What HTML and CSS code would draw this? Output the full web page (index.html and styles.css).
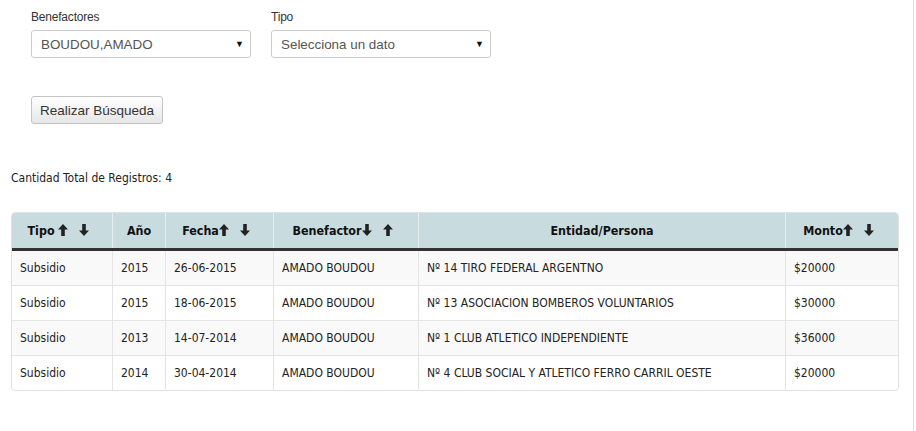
FILE: index.html
```html
<!DOCTYPE html>
<html lang="es">
<head>
<meta charset="utf-8">
<title>Subsidios</title>
<link rel="stylesheet" href="styles.css">
</head>
<body>
<div class="page">
  <div class="filters">
    <div class="field">
      <label class="lbl">Benefactores</label>
      <div class="select"><span>BOUDOU,AMADO</span><span class="caret">▼</span></div>
    </div>
    <div class="field">
      <label class="lbl">Tipo</label>
      <div class="select"><span>Selecciona un dato</span><span class="caret">▼</span></div>
    </div>
  </div>
  <button class="btn">Realizar Búsqueda</button>
  <p class="count">Cantidad Total de Registros: 4</p>
  <div class="tablewrap">
    <table class="grid">
      <thead>
        <tr>
          <th class="c1 sort">Tipo <svg class="ar" viewBox="0 0 10 12"><path d="M5 0L10 5.5H6.8V12H3.2V5.5H0Z"/></svg><span class="gap"></span><svg class="ar" viewBox="0 0 10 12"><path d="M5 12L10 6.5H6.8V0H3.2V6.5H0Z"/></svg></th>
          <th class="c2">Año</th>
          <th class="c3 sort">Fecha<svg class="ar" viewBox="0 0 10 12"><path d="M5 0L10 5.5H6.8V12H3.2V5.5H0Z"/></svg><span class="gap"></span><svg class="ar" viewBox="0 0 10 12"><path d="M5 12L10 6.5H6.8V0H3.2V6.5H0Z"/></svg></th>
          <th class="c4 sort">Benefactor<svg class="ar" viewBox="0 0 10 12"><path d="M5 12L10 6.5H6.8V0H3.2V6.5H0Z"/></svg><span class="gap"></span><svg class="ar" viewBox="0 0 10 12"><path d="M5 0L10 5.5H6.8V12H3.2V5.5H0Z"/></svg></th>
          <th class="c5">Entidad/Persona</th>
          <th class="c6 sort">Monto<svg class="ar" viewBox="0 0 10 12"><path d="M5 0L10 5.5H6.8V12H3.2V5.5H0Z"/></svg><span class="gap"></span><svg class="ar" viewBox="0 0 10 12"><path d="M5 12L10 6.5H6.8V0H3.2V6.5H0Z"/></svg></th>
        </tr>
      </thead>
      <tbody>
        <tr><td>Subsidio</td><td>2015</td><td>26-06-2015</td><td>AMADO BOUDOU</td><td>Nº 14 TIRO FEDERAL ARGENTNO</td><td>$20000</td></tr>
        <tr><td>Subsidio</td><td>2015</td><td>18-06-2015</td><td>AMADO BOUDOU</td><td>Nº 13 ASOCIACION BOMBEROS VOLUNTARIOS</td><td>$30000</td></tr>
        <tr><td>Subsidio</td><td>2013</td><td>14-07-2014</td><td>AMADO BOUDOU</td><td>Nº 1 CLUB ATLETICO INDEPENDIENTE</td><td>$36000</td></tr>
        <tr><td>Subsidio</td><td>2014</td><td>30-04-2014</td><td>AMADO BOUDOU</td><td>Nº 4 CLUB SOCIAL Y ATLETICO FERRO CARRIL OESTE</td><td>$20000</td></tr>
      </tbody>
    </table>
  </div>
</div>
</body>
</html>
```
FILE: styles.css
```css
html, body {
  margin: 0;
  padding: 0;
  background: #fff;
}
body {
  font-family: "DejaVu Sans Condensed", "DejaVu Sans", sans-serif;
  color: #222;
}
.page {
  width: 913px;
  min-height: 431px;
  border-right: 1px solid #dcdcdc;
  box-sizing: content-box;
  padding: 0;
}
.filters {
  display: flex;
  gap: 20px;
  padding: 10px 0 0 31px;
}
.field {
  display: flex;
  flex-direction: column;
}
.lbl {
  font-family: "Liberation Sans", Arial, sans-serif;
  font-size: 12px;
  color: #333;
  line-height: 15px;
  margin-bottom: 5px;
  letter-spacing: -0.2px;
}
.select {
  height: 26px;
  border: 1px solid #ccc;
  border-radius: 3px;
  display: flex;
  align-items: center;
  justify-content: space-between;
  padding: 0 6px 0 9px;
  box-sizing: content-box;
  width: 203px;
  font-family: "Liberation Sans", Arial, sans-serif;
  font-size: 13.4px;
  color: #555;
}
.caret {
  font-size: 9px;
  color: #111;
}
.btn {
  display: block;
  margin: 38px 0 0 31px;
  height: 28px;
  width: 132px;
  padding: 0;
  border: 1px solid #c4c4c4;
  border-radius: 3px;
  background: linear-gradient(#ffffff, #e6e6e6);
  font-family: "Liberation Sans", Arial, sans-serif;
  font-size: 13.5px;
  color: #333;
}
.count {
  margin: 47px 0 0 11px;
  font-size: 12px;
  line-height: 15px;
  color: #222;
}
.tablewrap {
  margin: 26px 0 0 11px;
  width: 888px;
  border: 1px solid #e2e2e2;
  border-radius: 4px;
  overflow: hidden;
  box-sizing: border-box;
}
.grid {
  width: 100%;
  border-collapse: collapse;
  font-size: 12px;
  table-layout: fixed;
}
.grid th {
  background: #c8dce0;
  height: 35px;
  border-left: 1px solid #e8eef0;
  border-bottom: 3px solid #333;
  font-weight: bold;
  font-size: 12.4px;
  color: #111;
  text-align: center;
  padding: 0;
  white-space: nowrap;
}
.grid th.sort { padding-right: 7px; }
.grid th:first-child, .grid td:first-child { border-left: none; }
.grid td {
  height: 34px;
  border-left: 1px solid #e4e4e4;
  border-top: 1px solid #e4e4e4;
  padding: 0 0 0 8px;
  color: #222;
  white-space: nowrap;
}
.grid tbody tr:first-child td { border-top: none; }
.grid tbody tr:nth-child(odd) td { background: #f9f9f9; }
.c1 { width: 93px; }
.c2 { width: 52px; }
.c3 { width: 100px; }
.c4 { width: 137px; }
.c5 { width: 366px; }
.ar {
  width: 10px;
  height: 12px;
  fill: #222;
  vertical-align: -1px;
}
.gap {
  display: inline-block;
  width: 11px;
}
```
